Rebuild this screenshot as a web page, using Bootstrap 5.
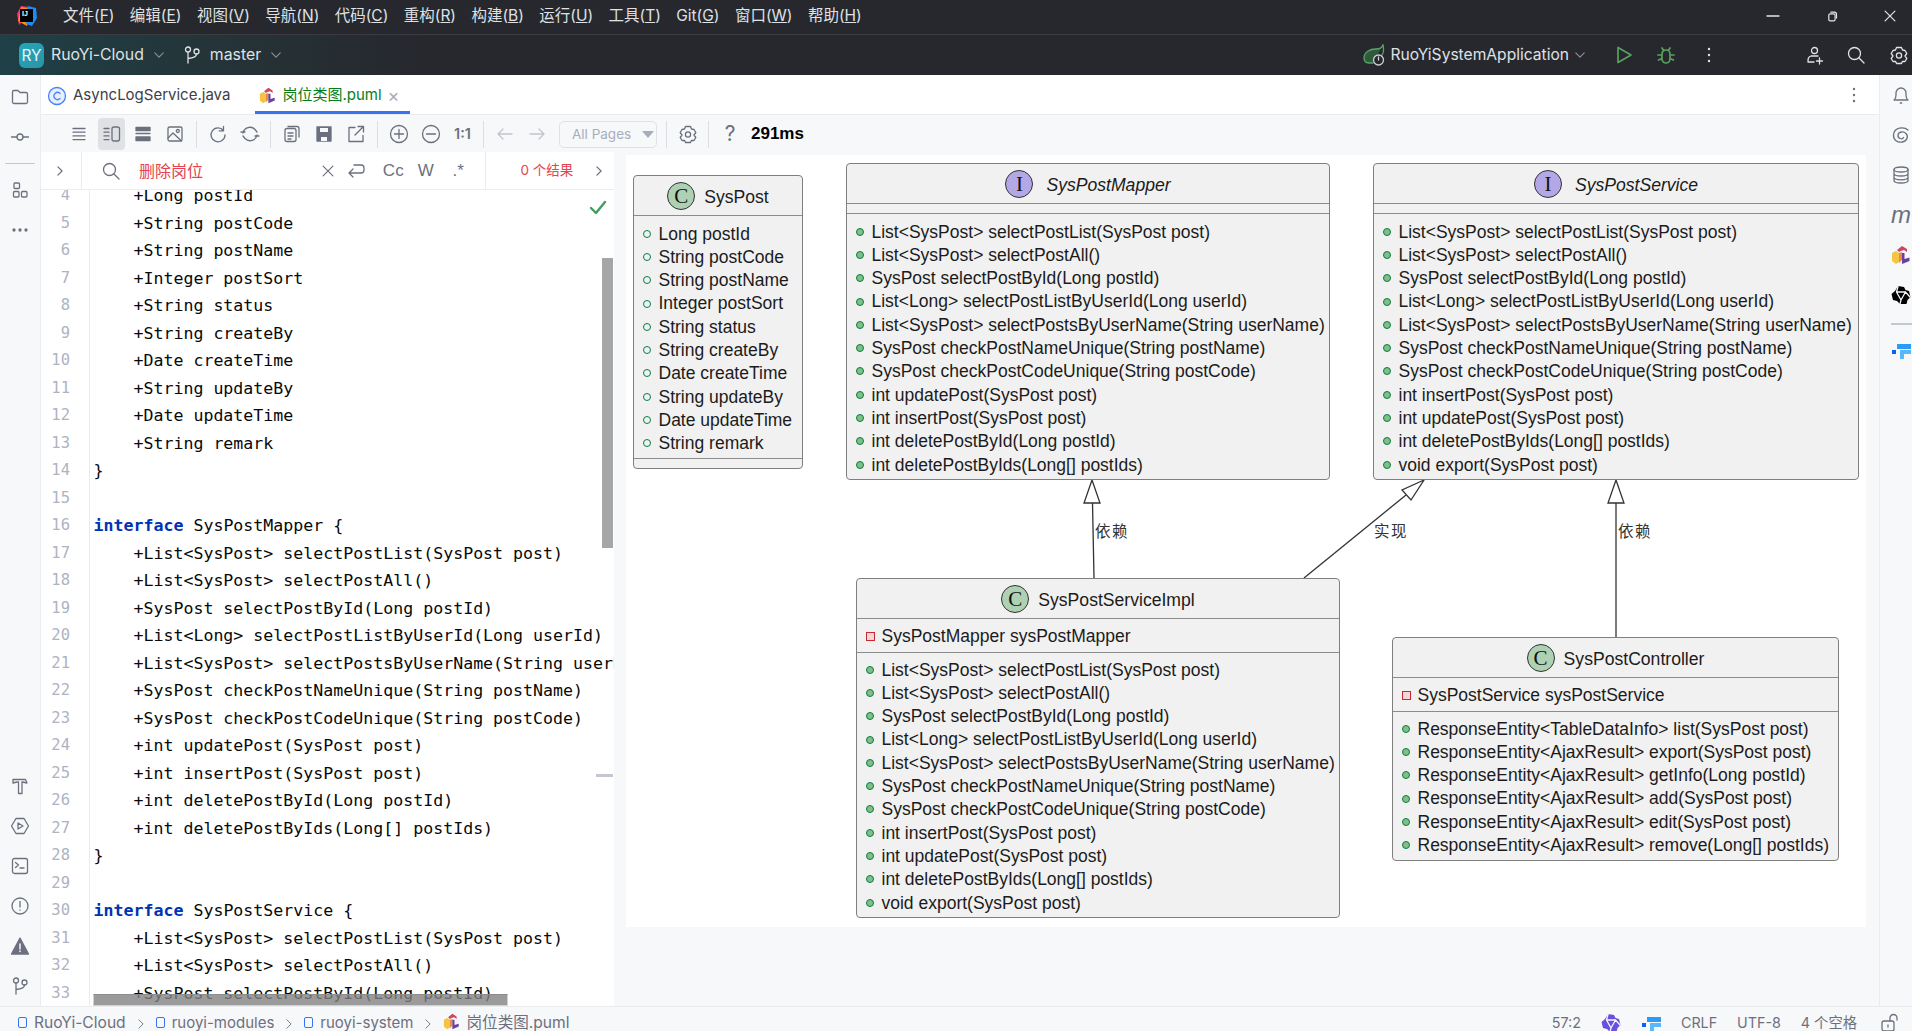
<!DOCTYPE html>
<html lang="zh">
<head>
<meta charset="utf-8">
<title>RuoYi-Cloud</title>
<link rel="stylesheet" href="https://cdn.jsdelivr.net/npm/bootstrap@5.3.0/dist/css/bootstrap.min.css">
<style>
html,body{height:100%;}
body{font-family:"Inter","Noto Sans CJK SC",sans-serif;font-size:15px;background:#fff;color:#1e1f22;overflow:hidden;}
.ide{height:1031px;width:1912px;}
.ico{width:20px;height:20px;fill:none;stroke:currentColor;stroke-width:1.3;stroke-linecap:round;stroke-linejoin:round;flex:none;}
.ico-lg{width:24px;height:24px;}
.ico-sm{width:14px;height:14px;stroke-width:1.7;}
.ico-md{width:17px;height:17px;}
.titlebar{height:35px;background:#27282e;border-bottom:1px solid #3b3c42;color:#dfe1e5;flex:none;padding-left:14px;padding-bottom:2px;position:relative;}
.menu-row{margin-left:24px;gap:15.4px;font-size:15.5px;white-space:nowrap;}
.win-btns{margin-left:auto;gap:43px;padding-right:15px;color:#e4e5e8;}
.mainbar{height:40px;flex:none;background:linear-gradient(90deg,#1e4046 0,#243539 200px,#27282e 420px);color:#dfe1e5;padding-left:19px;padding-right:3px;font-size:15.8px;white-space:nowrap;}
.ry-badge{width:25px;height:25px;border-radius:6px;background:linear-gradient(135deg,#25a6bb,#2b93a8);color:#e8f6f8;font-size:15.5px;line-height:25px;text-align:center;margin-right:7px;}
.chev{color:#8a8d94;}
.run-green{color:#57a15f;stroke-width:1.7;}
.gap-play{margin-left:27px;}
.gap-bug{margin-left:22px;}
.gap-more{margin-left:23px;}
.gap-user{margin-left:86px;}
.gap-search{margin-left:21px;}
.gap-gear{margin-left:23px;}
.run-name{margin-left:4px;font-size:15.6px;}
.center-col{min-width:0;}
.strip-left{width:41px;flex:none;background:#f7f8fa;border-right:1px solid #ebecf0;color:#6c707e;padding-top:2px;}
.strip-left .slot{height:40px;display:flex;align-items:center;justify-content:center;}
.strip-sep{height:1px;width:30px;background:#c4c7cf;margin:6px auto;}
.strip-right{width:33px;flex:none;background:#f7f8fa;border-left:1px solid #ebecf0;color:#6c707e;padding-left:11px;}
.strip-right .slot{height:40px;display:flex;align-items:center;}
.strip-m{font-size:24px;font-style:italic;font-family:"Liberation Sans",sans-serif;}
.strip-sep2{height:2px;width:22px;background:#c4c7cf;margin:8px 0 5px;}
.tabs{height:40px;flex:none;background:#fff;border-bottom:1px solid #ebecf0;font-size:15px;padding-left:6px;color:#3d4048;position:relative;}
.tab-item{height:39px;white-space:nowrap;padding-top:2px;}
.tab-active{color:#067d17;border-bottom:3px solid #3574f0;margin-left:25px;padding:5px 8px 0 4px;width:155px;}
.tab-name{margin-left:6px;}
.tab-close{color:#a8adbd;font-size:18px;margin-left:6px;}
.doc-dots{margin-left:auto;margin-right:15px;color:#6c707e;}
.tools{height:37px;flex:none;background:#f7f8fa;padding-left:22px;color:#6c707e;white-space:nowrap;padding-top:1px;}
.tslot{width:32px;height:32px;display:flex;align-items:center;justify-content:center;flex:none;font-size:14.5px;font-weight:600;}
.tslot-q{font-size:21px;font-weight:400;}
.tslot-on{background:#dfe1e5;border-radius:4px;width:27px;margin:0 2px 0 3px;}
.tslot-dim{color:#c2c5ce;}
.tsep{width:1px;height:27px;background:#dcdee3;margin:0 5px 0 4.5px;flex:none;}
.pages{width:98px;height:27px;border:1.5px solid #dfe1e5;border-radius:5px;margin-left:6px;margin-right:4px;color:#a8adbd;font-size:13.5px;padding-left:12px;flex:none;}
.pages-caret{width:0;height:0;border-left:6px solid transparent;border-right:6px solid transparent;border-top:7px solid #a8adbd;margin-left:11px;}
.timing{font-weight:700;color:#000;font-size:17px;margin-left:5px;font-family:"Liberation Sans",sans-serif;}
.work{min-height:0;background:#f7f8fa;}
.editor{width:573px;flex:none;background:#fff;}
.findbar{height:38px;flex:none;border-bottom:1px solid #ebecf0;color:#6c707e;}
.find-arrow{width:41px;height:100%;border-right:1px solid #ebecf0;padding-left:12px;flex:none;}
.find-q{margin-left:19px;width:26px;flex:none;}
.find-text{color:#e5434f;width:182px;margin-left:12px;flex:none;font-size:16px;}
.find-wrap{margin-left:11px;display:flex;}
.find-opt{font-size:17px;font-weight:400;font-family:"Liberation Sans",sans-serif;width:32.500px;text-align:center;flex:none;}
.find-opt-first{margin-left:11px;}
.find-end{height:100%;border-left:1px solid #ebecf0;margin-left:10px;padding-left:35px;flex:none;}
.find-none{color:#e5434f;font-size:13.5px;white-space:nowrap;width:52px;}
.find-next{margin-left:19px;}
.code-wrap{min-height:0;}
.code-scroll{margin-top:-8px;}
.code-line{height:27.53px;line-height:27.53px;white-space:pre;font-family:"DejaVu Sans Mono",monospace;font-size:16.6px;display:flex;}
.ln{width:49px;flex:none;border-right:1px solid #ebecf0;text-align:right;padding-right:19px;color:#aeb3c2;font-size:15.5px;}
.cd{padding-left:3.5px;color:#080808;}
.kw{color:#0033b3;font-weight:600;}
.check-ok{position:absolute;left:547px;top:7px;color:#3f9e5c;}
.vthumb{position:absolute;left:561px;top:68px;width:11px;height:290px;background:#a6a6a6;}
.hthumb{position:absolute;left:52px;top:804px;width:415px;height:12px;background:rgba(130,130,130,.8);border:1px solid #d2d2d2;border-top-color:#8c8c8c;}
.fold-mark{position:absolute;left:555px;top:584px;width:17px;height:3px;background:#c4c7cf;}
.canvas{position:relative;width:1240px;height:772px;background:#fff;margin:3px 0 0 12px;flex:none;font-family:"Liberation Sans",sans-serif;color:#1b1b1b;}
.edges{position:absolute;left:0;top:0;width:1240px;height:772px;}
.uml{position:absolute;background:#f1f1f1;border:1.5px solid #7f7f7f;border-radius:4px;font-size:17.5px;white-space:nowrap;}
.n-post{left:7px;top:20px;width:170px;height:294px;}
.n-mapper{left:220px;top:8px;width:484px;height:317px;}
.n-service{left:747px;top:8px;width:486px;height:317px;}
.n-impl{left:230px;top:423px;width:484px;height:340px;}
.n-ctrl{left:766px;top:482px;width:447px;height:224px;}
.uml-head{height:39px;gap:9px;font-size:17.6px;border-bottom:1px solid #8c8c8c;box-sizing:content-box;}
.head-txt{padding-top:4px;}
.uml-i{font-style:italic;margin-left:4px;}
.spot{width:28px;height:28px;border-radius:50%;border:1px solid #333;text-align:center;font-family:"Liberation Serif",serif;font-size:21px;line-height:26px;color:#111;flex:none;}
.spot-c{background:#add1b2;}
.spot-i{background:#b4a7e5;}
.comp-empty{height:10px;border-bottom:1px solid #8c8c8c;}
.comp-field{height:34px;border-bottom:1px solid #8c8c8c;padding:2px 0 0 8.5px;gap:8px;}
.comp-list{padding:6px 0 0 8.5px;}
.comp-tight{padding-top:5px;}
.comp-foot{border-top:1px solid #8c8c8c;margin-top:3px;}
.urow{height:23.3px;gap:8px;}
.dot-on{width:8px;height:8px;border-radius:50%;background:#84be84;border:1.2px solid #038048;flex:none;}
.dot-off{width:8px;height:8px;border-radius:50%;border:1.5px solid #038048;flex:none;}
.sq-priv{width:9px;height:9px;background:#f6d5d8;border:1.5px solid #c82930;flex:none;margin-right:-1px;}
.lbl{position:absolute;font-family:"Noto Sans CJK SC",sans-serif;font-size:15.5px;letter-spacing:1.5px;color:#333;line-height:22px;white-space:nowrap;}
.l1{left:469px;top:364px;}
.l2{left:748px;top:364px;}
.l3{left:992px;top:364px;}
.statusbar{height:25px;flex:none;background:#f7f8fa;border-top:1px solid #ebecf0;color:#6c707e;font-size:15.6px;padding:6px 12px 0 18px;white-space:nowrap;line-height:20px;overflow:hidden;}
.crumb-sq{width:9px;height:11px;border:1.7px solid #3574f0;border-radius:2px;margin-right:7px;flex:none;}
.crumb-chev{margin:0 8px 0 8px;color:#6c707e;stroke-width:1.3;}
.crumb-low{font-size:15px;}
.crumb-name{margin-left:6px;}
.stat-right{margin-left:auto;gap:20px;font-size:14.3px;}
.tri-purple{color:#6b4fe0;}
.lock-gap{margin-left:3px;}
</style>
</head>
<body>
<svg width="0" height="0" class="position-absolute">
<defs>
<symbol id="i-folder" viewBox="0 0 20 20"><path d="M2.5 5a1.5 1.5 0 0 1 1.5-1.5h4l2 2h6A1.5 1.5 0 0 1 17.500 7v8a1.500 1.500 0 0 1-1.500 1.500H4A1.500 1.500 0 0 1 2.500 15z"/></symbol>
<symbol id="i-commit" viewBox="0 0 20 20"><circle cx="10" cy="10" r="3"/><path d="M1.500 10H7M13 10h5.500"/></symbol>
<symbol id="i-struct" viewBox="0 0 20 20"><rect x="4" y="3" width="5.500" height="5.500" rx="1"/><rect x="3.500" y="11.500" width="5.500" height="5.500" rx="1"/><rect x="11.500" y="11.500" width="5.500" height="5.500" rx="1"/></symbol>
<symbol id="i-dots-h" viewBox="0 0 20 20"><circle cx="4" cy="10" r="1" fill="currentColor"/><circle cx="10" cy="10" r="1" fill="currentColor"/><circle cx="16" cy="10" r="1" fill="currentColor"/></symbol>
<symbol id="i-dots-v" viewBox="0 0 20 20"><circle cx="10" cy="4" r="1.200" fill="currentColor" stroke="none"/><circle cx="10" cy="10" r="1.200" fill="currentColor" stroke="none"/><circle cx="10" cy="16" r="1.200" fill="currentColor" stroke="none"/></symbol>
<symbol id="i-hammer" viewBox="0 0 20 20"><path d="M3 3.500h12.500l1.500 3.500-4.500-1H12v11.500H8.500V6H7L3 7z"/></symbol>
<symbol id="i-services" viewBox="0 0 20 20"><path d="M6 2.500h8l4.500 7.500-4.500 7.500H6L1.500 10z"/><path d="M8 7l5 3-5 3z"/></symbol>
<symbol id="i-term" viewBox="0 0 20 20"><rect x="2.500" y="2.500" width="15" height="15" rx="2"/><path d="M5.500 6.500l3 2.500-3 2.500M10 12h4"/></symbol>
<symbol id="i-problem" viewBox="0 0 20 20"><circle cx="10" cy="10" r="8"/><path d="M10 5.500v5.500M10 14v.2"/></symbol>
<symbol id="i-warn" viewBox="0 0 20 20"><path d="M10 2L18.500 18H1.500z" fill="currentColor" stroke="currentColor"/><path d="M10 8v5M10 15v.4" stroke="#f7f8fa" stroke-width="1.500"/></symbol>
<symbol id="i-branch" viewBox="0 0 20 20"><circle cx="6" cy="4.500" r="2.500"/><circle cx="14.500" cy="6.500" r="2.500"/><path d="M6 7v11M14.500 9c0 3-3 4-8.500 4.500"/></symbol>
<symbol id="i-bell" viewBox="0 0 20 20"><path d="M3 15h14c-1.500-1-2-2.500-2-5V8a5 5 0 0 0-10 0v2c0 2.500-.5 4-2 5zM9.300 18h1.400"/></symbol>
<symbol id="i-spiral" viewBox="0 0 20 20"><path d="M17 5C13 1.500 3 2 2.500 10c-.3 5 4 8 9 7s6-6 3.500-8.500S7.500 6.500 7 10s4.500 5 5.500 2.500"/></symbol>
<symbol id="i-db" viewBox="0 0 20 20"><ellipse cx="10" cy="4.500" rx="7" ry="2.500"/><path d="M3 4.500v11c0 1.400 3 2.500 7 2.500s7-1.100 7-2.500v-11M3 8.500c0 1.400 3 2.500 7 2.500s7-1.100 7-2.500M3 12.300c0 1.400 3 2.500 7 2.500s7-1.100 7-2.500"/></symbol>
<symbol id="i-puml" viewBox="0 0 20 20"><path d="M1 8l4-2 3 2v9l-3 2-4-3z" fill="#f4c542" stroke="none"/><path d="M8 8l3-1v8l-3 3z" fill="#f0883e" stroke="none"/><path d="M6 5l5-4 5 3v3l-3-2-3 1-2 1z" fill="#d0455f" stroke="none"/><path d="M11 8h2.500v6l5-1.500V16L11 19z" fill="#6b3fa0" stroke="none"/></symbol>
<symbol id="i-tri" viewBox="0 0 20 20"><path d="M7 1l6 1 1.500 3L18 6l1.500 6-3 3-1 4H9l-3-3-4-1L.500 9 4 6z" fill="currentColor" stroke="none"/><path d="M5.500 7h9L10 15zM7 1.500L5.500 7M19 12l-4.500-5M9 19l1-4" stroke="#f7f8fa" stroke-width="1.300" fill="none"/></symbol>
<symbol id="i-fire" viewBox="0 0 20 20"><path d="M6 4h14v5H6z" fill="#2c9bf5" stroke="none"/><path d="M9 10h11v4H13v5H9z" fill="#59b7fb" stroke="none"/><path d="M1 10h4v4H1z" fill="#0e62f0" stroke="none"/></symbol>
<symbol id="i-list" viewBox="0 0 20 20"><path d="M4 4.500h12M4 8.200h12M4 11.900h12M4 15.600h12"/></symbol>
<symbol id="i-split" viewBox="0 0 20 20"><path d="M2 4.500h5M2 8.200h5M2 11.900h5M2 15.600h5"/><rect x="10" y="3" width="7.500" height="14" rx="2"/></symbol>
<symbol id="i-stack" viewBox="0 0 20 20"><path d="M3 3.500h14v3H3zM3 9.500h14M3 13h14v3.500H3z" fill="currentColor"/></symbol>
<symbol id="i-image" viewBox="0 0 20 20"><rect x="3" y="3" width="14" height="14" rx="1.500"/><circle cx="12.800" cy="7" r="1.500"/><path d="M3 14l5-5 8.500 8"/></symbol>
<symbol id="i-reload" viewBox="0 0 20 20"><path d="M15.500 6.500A7 7 0 1 0 17 11M15.500 2.500v4.300h-4.300"/></symbol>
<symbol id="i-sync" viewBox="0 0 20 20"><path d="M3 9a7 7 0 0 1 12-3.500L17 8M17 11a7 7 0 0 1-12 3.500L3 12M1 8h4M15 12h4"/></symbol>
<symbol id="i-copy" viewBox="0 0 20 20"><rect x="3" y="4.500" width="11" height="13" rx="2"/><path d="M6 2.500h9a2 2 0 0 1 2 2V13M6 9h5M6 12h5M6 15h3"/></symbol>
<symbol id="i-save" viewBox="0 0 20 20"><path d="M3 3h14v14H3z" fill="currentColor"/><path d="M6 4v4h8V4M7 13h6v4H7z" fill="#f7f8fa" stroke="none"/></symbol>
<symbol id="i-export" viewBox="0 0 20 20"><path d="M9 3.500H3v14h14v-6M12 2.500h5.500V8M17 3l-8 8"/></symbol>
<symbol id="i-plus" viewBox="0 0 20 20"><circle cx="10" cy="10" r="8.500"/><path d="M10 5.500v9M5.500 10h9"/></symbol>
<symbol id="i-minus" viewBox="0 0 20 20"><circle cx="10" cy="10" r="8.500"/><path d="M5.500 10h9"/></symbol>
<symbol id="i-left" viewBox="0 0 20 20"><path d="M17 10H3M8 5l-5 5 5 5"/></symbol>
<symbol id="i-right" viewBox="0 0 20 20"><path d="M3 10h14M12 5l5 5-5 5"/></symbol>
<symbol id="i-gear" viewBox="0 0 20 20"><path d="M7.500 2.500h5l1 2.500 2.500.5 1.800 3-1.800 2.500 1.800 2.500-1.800 3-2.500-.2-1 2.200h-5l-1-2.200-2.500.2-1.800-3L4 11 2.200 8.500l1.800-3 2.500-.5z"/><circle cx="10" cy="10.500" r="2.600"/></symbol>
<symbol id="i-search" viewBox="0 0 20 20"><circle cx="8.500" cy="8.500" r="6"/><path d="M13 13l5 5"/></symbol>
<symbol id="i-chev-r" viewBox="0 0 20 20"><path d="M7 4l6 6-6 6"/></symbol>
<symbol id="i-chev-d" viewBox="0 0 20 20"><path d="M4 7l6 6 6-6"/></symbol>
<symbol id="i-wrap" viewBox="0 0 20 20"><path d="M8 4h7a3 3 0 0 1 3 3v2a3 3 0 0 1-3 3H3M7 8l-4 4 4 4"/></symbol>
<symbol id="i-user" viewBox="0 0 20 20"><circle cx="9.500" cy="5.500" r="3"/><path d="M3 17c0-3 0-5 3-6h7M14.500 13v6M11.500 16h6M3 17h6"/></symbol>
<symbol id="i-play" viewBox="0 0 20 20"><path d="M4 2.500v15L17 10z"/></symbol>
<symbol id="i-bug" viewBox="0 0 20 20"><path d="M6 9a4 4 0 0 1 8 0v5a4 4 0 0 1-8 0zM7.500 5.500L6 3M12.500 5.500L14 3M2 10h4M14 10h4M2.500 15L6 13.500M17.500 15L14 13.500"/></symbol>
<symbol id="i-spring" viewBox="0 0 24 24"><path d="M21 2c-1 3-3 4-7 4C8 6 2 9 2 15c0 3 2 5 5 5h4" fill="#2f5b3c" stroke="#5aa469"/><path d="M21 2c1 5 1 9-2 11" stroke="#5aa469"/><circle cx="16.500" cy="17" r="5" fill="#27282e" stroke="#ced0d6"/><path d="M16.500 14v3" stroke="#ced0d6"/></symbol>
<symbol id="i-close" viewBox="0 0 20 20"><path d="M3 3l14 14M17 3L3 17"/></symbol>
<symbol id="i-restore" viewBox="0 0 20 20"><rect x="4" y="7" width="9" height="10" rx="2"/><path d="M7 4.500h5a3 3 0 0 1 3 3V13"/></symbol>
<symbol id="i-lock" viewBox="0 0 20 20"><rect x="2" y="8" width="12" height="10" rx="2"/><path d="M10 8V5a3.500 3.500 0 0 1 7 0v2M8 12v2"/></symbol>
<symbol id="i-check" viewBox="0 0 20 20"><path d="M3 11l5 5 9-11" stroke-width="2.400"/></symbol>
<symbol id="i-cfile" viewBox="0 0 20 20"><circle cx="10" cy="10" r="8.500" fill="#e7effd" stroke="#4682fa"/><path d="M13 7.500a3.500 3.500 0 1 0 0 5" stroke="#4682fa"/></symbol>
</defs>
</svg>

<div class="ide d-flex flex-column">
  <div class="titlebar d-flex align-items-center">
    <svg width="25" height="24" viewBox="0 0 25 24"><path d="M3 10L7 2l8 1-4 12-6 6z" fill="#ff2d78"/><path d="M4 17l3-14 10 2-4 17z" fill="#ff8a1e"/><path d="M14 2l8 2 1 10-5 8-6-2z" fill="#1e8cf0"/><rect x="6" y="5" width="13" height="13" fill="#000"/><text x="8" y="12" font-size="7" font-weight="700" fill="#fff" font-family="Liberation Sans">IJ</text></svg>
    <div class="menu-row d-flex">
      <span>文件(<u>F</u>)</span><span>编辑(<u>E</u>)</span><span>视图(<u>V</u>)</span><span>导航(<u>N</u>)</span><span>代码(<u>C</u>)</span><span>重构(<u>R</u>)</span><span>构建(<u>B</u>)</span><span>运行(<u>U</u>)</span><span>工具(<u>T</u>)</span><span>Git(<u>G</u>)</span><span>窗口(<u>W</u>)</span><span>帮助(<u>H</u>)</span>
    </div>
    <div class="win-btns d-flex align-items-center">
      <svg class="ico"><path d="M4 10h12"/></svg>
      <svg class="ico ico-sm"><use href="#i-restore"/></svg>
      <svg class="ico ico-sm"><use href="#i-close"/></svg>
    </div>
  </div>
  <div class="mainbar d-flex align-items-center">
    <span class="ry-badge">RY</span><span>RuoYi-Cloud</span>
    <svg class="ico ico-sm chev ms-2"><use href="#i-chev-d"/></svg>
    <svg class="ico ms-3"><use href="#i-branch"/></svg>
    <span class="ms-2">master</span>
    <svg class="ico ico-sm chev ms-2"><use href="#i-chev-d"/></svg>
    <div class="ms-auto d-flex align-items-center">
      <svg class="ico ico-lg"><use href="#i-spring"/></svg>
      <span class="run-name">RuoYiSystemApplication</span>
      <svg class="ico ico-sm chev ms-1"><use href="#i-chev-d"/></svg>
      <svg class="ico run-green gap-play"><use href="#i-play"/></svg>
      <svg class="ico run-green gap-bug"><use href="#i-bug"/></svg>
      <svg class="ico gap-more"><use href="#i-dots-v"/></svg>
      <svg class="ico gap-user"><use href="#i-user"/></svg>
      <svg class="ico gap-search"><use href="#i-search"/></svg>
      <svg class="ico gap-gear"><use href="#i-gear"/></svg>
    </div>
  </div>
  <div class="d-flex flex-grow-1 overflow-hidden">
    <div class="strip-left d-flex flex-column">
      <div class="slot"><svg class="ico"><use href="#i-folder"/></svg></div>
      <div class="slot"><svg class="ico"><use href="#i-commit"/></svg></div>
      <div class="strip-sep"></div>
      <div class="slot"><svg class="ico"><use href="#i-struct"/></svg></div>
      <div class="slot"><svg class="ico"><use href="#i-dots-h"/></svg></div>
      <div class="mt-auto">
        <div class="slot"><svg class="ico"><use href="#i-hammer"/></svg></div>
        <div class="slot"><svg class="ico"><use href="#i-services"/></svg></div>
        <div class="slot"><svg class="ico"><use href="#i-term"/></svg></div>
        <div class="slot"><svg class="ico"><use href="#i-problem"/></svg></div>
        <div class="slot"><svg class="ico"><use href="#i-warn"/></svg></div>
        <div class="slot"><svg class="ico"><use href="#i-branch"/></svg></div>
      </div>
    </div>
    <div class="center-col flex-grow-1 d-flex flex-column">
      <div class="tabs d-flex align-items-start">
        <div class="tab-item d-flex align-items-center"><svg class="ico"><use href="#i-cfile"/></svg><span class="tab-name">AsyncLogService.java</span></div>
        <div class="tab-item tab-active d-flex align-items-center"><svg class="ico ico-md"><use href="#i-puml"/></svg><span class="tab-name">岗位类图.puml</span><span class="tab-close">×</span></div>
        <svg class="ico doc-dots align-self-center"><use href="#i-dots-v"/></svg>
      </div>
      <div class="tools d-flex align-items-center">
        <span class="tslot"><svg class="ico"><use href="#i-list"/></svg></span>
        <span class="tslot tslot-on"><svg class="ico"><use href="#i-split"/></svg></span>
        <span class="tslot"><svg class="ico"><use href="#i-stack"/></svg></span>
        <span class="tslot"><svg class="ico"><use href="#i-image"/></svg></span>
        <span class="tsep"></span>
        <span class="tslot"><svg class="ico"><use href="#i-reload"/></svg></span>
        <span class="tslot"><svg class="ico"><use href="#i-sync"/></svg></span>
        <span class="tsep"></span>
        <span class="tslot"><svg class="ico"><use href="#i-copy"/></svg></span>
        <span class="tslot"><svg class="ico"><use href="#i-save"/></svg></span>
        <span class="tslot"><svg class="ico"><use href="#i-export"/></svg></span>
        <span class="tsep"></span>
        <span class="tslot"><svg class="ico"><use href="#i-plus"/></svg></span>
        <span class="tslot"><svg class="ico"><use href="#i-minus"/></svg></span>
        <span class="tslot">1:1</span>
        <span class="tsep"></span>
        <span class="tslot tslot-dim"><svg class="ico"><use href="#i-left"/></svg></span>
        <span class="tslot tslot-dim"><svg class="ico"><use href="#i-right"/></svg></span>
        <div class="pages d-flex align-items-center">All Pages<span class="pages-caret"></span></div>
        <span class="tsep"></span>
        <span class="tslot"><svg class="ico"><use href="#i-gear"/></svg></span>
        <span class="tsep"></span>
        <span class="tslot tslot-q">?</span>
        <span class="timing">291ms</span>
      </div>
      <div class="work d-flex flex-grow-1">
        <div class="editor d-flex flex-column">
          <div class="findbar d-flex align-items-center">
            <div class="find-arrow d-flex align-items-center"><svg class="ico ico-sm"><use href="#i-chev-r"/></svg></div>
            <span class="find-q d-flex align-items-center"><svg class="ico"><use href="#i-search"/></svg></span>
            <span class="find-text">删除岗位</span>
            <svg class="ico ico-sm"><use href="#i-close"/></svg>
            <span class="find-wrap"><svg class="ico"><use href="#i-wrap"/></svg></span>
            <span class="find-opt find-opt-first">Cc</span>
            <span class="find-opt">W</span>
            <span class="find-opt">.*</span>
            <div class="find-end d-flex align-items-center"><span class="find-none">0 个结果</span><svg class="ico ico-sm find-next"><use href="#i-chev-r"/></svg></div>
          </div>
          <div class="code-wrap position-relative overflow-hidden flex-grow-1">
            <div class="code-scroll">
              <div class="code-line"><span class="ln">4</span><span class="cd">    +Long postId</span></div>
              <div class="code-line"><span class="ln">5</span><span class="cd">    +String postCode</span></div>
              <div class="code-line"><span class="ln">6</span><span class="cd">    +String postName</span></div>
              <div class="code-line"><span class="ln">7</span><span class="cd">    +Integer postSort</span></div>
              <div class="code-line"><span class="ln">8</span><span class="cd">    +String status</span></div>
              <div class="code-line"><span class="ln">9</span><span class="cd">    +String createBy</span></div>
              <div class="code-line"><span class="ln">10</span><span class="cd">    +Date createTime</span></div>
              <div class="code-line"><span class="ln">11</span><span class="cd">    +String updateBy</span></div>
              <div class="code-line"><span class="ln">12</span><span class="cd">    +Date updateTime</span></div>
              <div class="code-line"><span class="ln">13</span><span class="cd">    +String remark</span></div>
              <div class="code-line"><span class="ln">14</span><span class="cd">}</span></div>
              <div class="code-line"><span class="ln">15</span><span class="cd"></span></div>
              <div class="code-line"><span class="ln">16</span><span class="cd"><span class="kw">interface</span> SysPostMapper {</span></div>
              <div class="code-line"><span class="ln">17</span><span class="cd">    +List&lt;SysPost&gt; selectPostList(SysPost post)</span></div>
              <div class="code-line"><span class="ln">18</span><span class="cd">    +List&lt;SysPost&gt; selectPostAll()</span></div>
              <div class="code-line"><span class="ln">19</span><span class="cd">    +SysPost selectPostById(Long postId)</span></div>
              <div class="code-line"><span class="ln">20</span><span class="cd">    +List&lt;Long&gt; selectPostListByUserId(Long userId)</span></div>
              <div class="code-line"><span class="ln">21</span><span class="cd">    +List&lt;SysPost&gt; selectPostsByUserName(String userName)</span></div>
              <div class="code-line"><span class="ln">22</span><span class="cd">    +SysPost checkPostNameUnique(String postName)</span></div>
              <div class="code-line"><span class="ln">23</span><span class="cd">    +SysPost checkPostCodeUnique(String postCode)</span></div>
              <div class="code-line"><span class="ln">24</span><span class="cd">    +int updatePost(SysPost post)</span></div>
              <div class="code-line"><span class="ln">25</span><span class="cd">    +int insertPost(SysPost post)</span></div>
              <div class="code-line"><span class="ln">26</span><span class="cd">    +int deletePostById(Long postId)</span></div>
              <div class="code-line"><span class="ln">27</span><span class="cd">    +int deletePostByIds(Long[] postIds)</span></div>
              <div class="code-line"><span class="ln">28</span><span class="cd">}</span></div>
              <div class="code-line"><span class="ln">29</span><span class="cd"></span></div>
              <div class="code-line"><span class="ln">30</span><span class="cd"><span class="kw">interface</span> SysPostService {</span></div>
              <div class="code-line"><span class="ln">31</span><span class="cd">    +List&lt;SysPost&gt; selectPostList(SysPost post)</span></div>
              <div class="code-line"><span class="ln">32</span><span class="cd">    +List&lt;SysPost&gt; selectPostAll()</span></div>
              <div class="code-line"><span class="ln">33</span><span class="cd">    +SysPost selectPostById(Long postId)</span></div>
            </div>
            <svg class="ico check-ok"><use href="#i-check"/></svg>
            <div class="vthumb"></div>
            <div class="fold-mark"></div>
            <div class="hthumb"></div>
          </div>
        </div>
        <div class="canvas">
          <svg class="edges" viewBox="0 0 1240 772" fill="none" stroke="#333" stroke-width="1.300">
            <path d="M468 423L466.500 348"/><path d="M466 325l-8 23h16z" fill="#fff"/>
            <path d="M678 423L780 340"/><path d="M798 325l-22 10 9 10z" fill="#fff"/>
            <path d="M990 482V348"/><path d="M990 325l-8 23h16z" fill="#fff"/>
          </svg>
          <span class="lbl l1">依赖</span><span class="lbl l2">实现</span><span class="lbl l3">依赖</span>

          <div class="uml n-post">
            <div class="uml-head d-flex align-items-center justify-content-center"><span class="spot spot-c">C</span><span class="head-txt">SysPost</span></div>
            <div class="comp-list">
              <div class="urow d-flex align-items-center"><i class="dot-off"></i><span>Long postId</span></div>
              <div class="urow d-flex align-items-center"><i class="dot-off"></i><span>String postCode</span></div>
              <div class="urow d-flex align-items-center"><i class="dot-off"></i><span>String postName</span></div>
              <div class="urow d-flex align-items-center"><i class="dot-off"></i><span>Integer postSort</span></div>
              <div class="urow d-flex align-items-center"><i class="dot-off"></i><span>String status</span></div>
              <div class="urow d-flex align-items-center"><i class="dot-off"></i><span>String createBy</span></div>
              <div class="urow d-flex align-items-center"><i class="dot-off"></i><span>Date createTime</span></div>
              <div class="urow d-flex align-items-center"><i class="dot-off"></i><span>String updateBy</span></div>
              <div class="urow d-flex align-items-center"><i class="dot-off"></i><span>Date updateTime</span></div>
              <div class="urow d-flex align-items-center"><i class="dot-off"></i><span>String remark</span></div>
            </div>
            <div class="comp-foot"></div>
          </div>

          <div class="uml n-mapper">
            <div class="uml-head d-flex align-items-center justify-content-center"><span class="spot spot-i">I</span><span class="head-txt uml-i">SysPostMapper</span></div>
            <div class="comp-empty"></div>
            <div class="comp-list">
              <div class="urow d-flex align-items-center"><i class="dot-on"></i><span>List&lt;SysPost&gt; selectPostList(SysPost post)</span></div>
              <div class="urow d-flex align-items-center"><i class="dot-on"></i><span>List&lt;SysPost&gt; selectPostAll()</span></div>
              <div class="urow d-flex align-items-center"><i class="dot-on"></i><span>SysPost selectPostById(Long postId)</span></div>
              <div class="urow d-flex align-items-center"><i class="dot-on"></i><span>List&lt;Long&gt; selectPostListByUserId(Long userId)</span></div>
              <div class="urow d-flex align-items-center"><i class="dot-on"></i><span>List&lt;SysPost&gt; selectPostsByUserName(String userName)</span></div>
              <div class="urow d-flex align-items-center"><i class="dot-on"></i><span>SysPost checkPostNameUnique(String postName)</span></div>
              <div class="urow d-flex align-items-center"><i class="dot-on"></i><span>SysPost checkPostCodeUnique(String postCode)</span></div>
              <div class="urow d-flex align-items-center"><i class="dot-on"></i><span>int updatePost(SysPost post)</span></div>
              <div class="urow d-flex align-items-center"><i class="dot-on"></i><span>int insertPost(SysPost post)</span></div>
              <div class="urow d-flex align-items-center"><i class="dot-on"></i><span>int deletePostById(Long postId)</span></div>
              <div class="urow d-flex align-items-center"><i class="dot-on"></i><span>int deletePostByIds(Long[] postIds)</span></div>
            </div>
          </div>

          <div class="uml n-service">
            <div class="uml-head d-flex align-items-center justify-content-center"><span class="spot spot-i">I</span><span class="head-txt uml-i">SysPostService</span></div>
            <div class="comp-empty"></div>
            <div class="comp-list">
              <div class="urow d-flex align-items-center"><i class="dot-on"></i><span>List&lt;SysPost&gt; selectPostList(SysPost post)</span></div>
              <div class="urow d-flex align-items-center"><i class="dot-on"></i><span>List&lt;SysPost&gt; selectPostAll()</span></div>
              <div class="urow d-flex align-items-center"><i class="dot-on"></i><span>SysPost selectPostById(Long postId)</span></div>
              <div class="urow d-flex align-items-center"><i class="dot-on"></i><span>List&lt;Long&gt; selectPostListByUserId(Long userId)</span></div>
              <div class="urow d-flex align-items-center"><i class="dot-on"></i><span>List&lt;SysPost&gt; selectPostsByUserName(String userName)</span></div>
              <div class="urow d-flex align-items-center"><i class="dot-on"></i><span>SysPost checkPostNameUnique(String postName)</span></div>
              <div class="urow d-flex align-items-center"><i class="dot-on"></i><span>SysPost checkPostCodeUnique(String postCode)</span></div>
              <div class="urow d-flex align-items-center"><i class="dot-on"></i><span>int insertPost(SysPost post)</span></div>
              <div class="urow d-flex align-items-center"><i class="dot-on"></i><span>int updatePost(SysPost post)</span></div>
              <div class="urow d-flex align-items-center"><i class="dot-on"></i><span>int deletePostByIds(Long[] postIds)</span></div>
              <div class="urow d-flex align-items-center"><i class="dot-on"></i><span>void export(SysPost post)</span></div>
            </div>
          </div>

          <div class="uml n-impl">
            <div class="uml-head d-flex align-items-center justify-content-center"><span class="spot spot-c">C</span><span class="head-txt">SysPostServiceImpl</span></div>
            <div class="comp-field d-flex align-items-center"><i class="sq-priv"></i><span>SysPostMapper sysPostMapper</span></div>
            <div class="comp-list comp-tight">
              <div class="urow d-flex align-items-center"><i class="dot-on"></i><span>List&lt;SysPost&gt; selectPostList(SysPost post)</span></div>
              <div class="urow d-flex align-items-center"><i class="dot-on"></i><span>List&lt;SysPost&gt; selectPostAll()</span></div>
              <div class="urow d-flex align-items-center"><i class="dot-on"></i><span>SysPost selectPostById(Long postId)</span></div>
              <div class="urow d-flex align-items-center"><i class="dot-on"></i><span>List&lt;Long&gt; selectPostListByUserId(Long userId)</span></div>
              <div class="urow d-flex align-items-center"><i class="dot-on"></i><span>List&lt;SysPost&gt; selectPostsByUserName(String userName)</span></div>
              <div class="urow d-flex align-items-center"><i class="dot-on"></i><span>SysPost checkPostNameUnique(String postName)</span></div>
              <div class="urow d-flex align-items-center"><i class="dot-on"></i><span>SysPost checkPostCodeUnique(String postCode)</span></div>
              <div class="urow d-flex align-items-center"><i class="dot-on"></i><span>int insertPost(SysPost post)</span></div>
              <div class="urow d-flex align-items-center"><i class="dot-on"></i><span>int updatePost(SysPost post)</span></div>
              <div class="urow d-flex align-items-center"><i class="dot-on"></i><span>int deletePostByIds(Long[] postIds)</span></div>
              <div class="urow d-flex align-items-center"><i class="dot-on"></i><span>void export(SysPost post)</span></div>
            </div>
          </div>

          <div class="uml n-ctrl">
            <div class="uml-head d-flex align-items-center justify-content-center"><span class="spot spot-c">C</span><span class="head-txt">SysPostController</span></div>
            <div class="comp-field d-flex align-items-center"><i class="sq-priv"></i><span>SysPostService sysPostService</span></div>
            <div class="comp-list comp-tight">
              <div class="urow d-flex align-items-center"><i class="dot-on"></i><span>ResponseEntity&lt;TableDataInfo&gt; list(SysPost post)</span></div>
              <div class="urow d-flex align-items-center"><i class="dot-on"></i><span>ResponseEntity&lt;AjaxResult&gt; export(SysPost post)</span></div>
              <div class="urow d-flex align-items-center"><i class="dot-on"></i><span>ResponseEntity&lt;AjaxResult&gt; getInfo(Long postId)</span></div>
              <div class="urow d-flex align-items-center"><i class="dot-on"></i><span>ResponseEntity&lt;AjaxResult&gt; add(SysPost post)</span></div>
              <div class="urow d-flex align-items-center"><i class="dot-on"></i><span>ResponseEntity&lt;AjaxResult&gt; edit(SysPost post)</span></div>
              <div class="urow d-flex align-items-center"><i class="dot-on"></i><span>ResponseEntity&lt;AjaxResult&gt; remove(Long[] postIds)</span></div>
            </div>
          </div>
        </div>
      </div>
    </div>
    <div class="strip-right">
      <div class="slot"><svg class="ico"><use href="#i-bell"/></svg></div>
      <div class="slot"><svg class="ico"><use href="#i-spiral"/></svg></div>
      <div class="slot"><svg class="ico"><use href="#i-db"/></svg></div>
      <div class="slot strip-m">m</div>
      <div class="slot"><svg class="ico"><use href="#i-puml"/></svg></div>
      <div class="slot text-black"><svg class="ico"><use href="#i-tri"/></svg></div>
      <div class="strip-sep2"></div>
      <div class="slot"><svg class="ico"><use href="#i-fire"/></svg></div>
    </div>
  </div>
  <div class="statusbar d-flex align-items-start">
    <i class="crumb-sq mt-1"></i><span>RuoYi-Cloud</span><svg class="ico ico-sm crumb-chev mt-1"><use href="#i-chev-r"/></svg>
    <i class="crumb-sq mt-1"></i><span class="crumb-low">ruoyi-modules</span><svg class="ico ico-sm crumb-chev mt-1"><use href="#i-chev-r"/></svg>
    <i class="crumb-sq mt-1"></i><span class="crumb-low">ruoyi-system</span><svg class="ico ico-sm crumb-chev mt-1"><use href="#i-chev-r"/></svg>
    <svg class="ico ico-md"><use href="#i-puml"/></svg><span class="crumb-name">岗位类图.puml</span>
    <div class="stat-right d-flex align-items-start">
      <span>57:2</span>
      <svg class="ico tri-purple"><use href="#i-tri"/></svg>
      <svg class="ico"><use href="#i-fire"/></svg>
      <span>CRLF</span><span>UTF-8</span><span>4 个空格</span>
      <svg class="ico lock-gap"><use href="#i-lock"/></svg>
    </div>
  </div>
</div>
</body>
</html>
